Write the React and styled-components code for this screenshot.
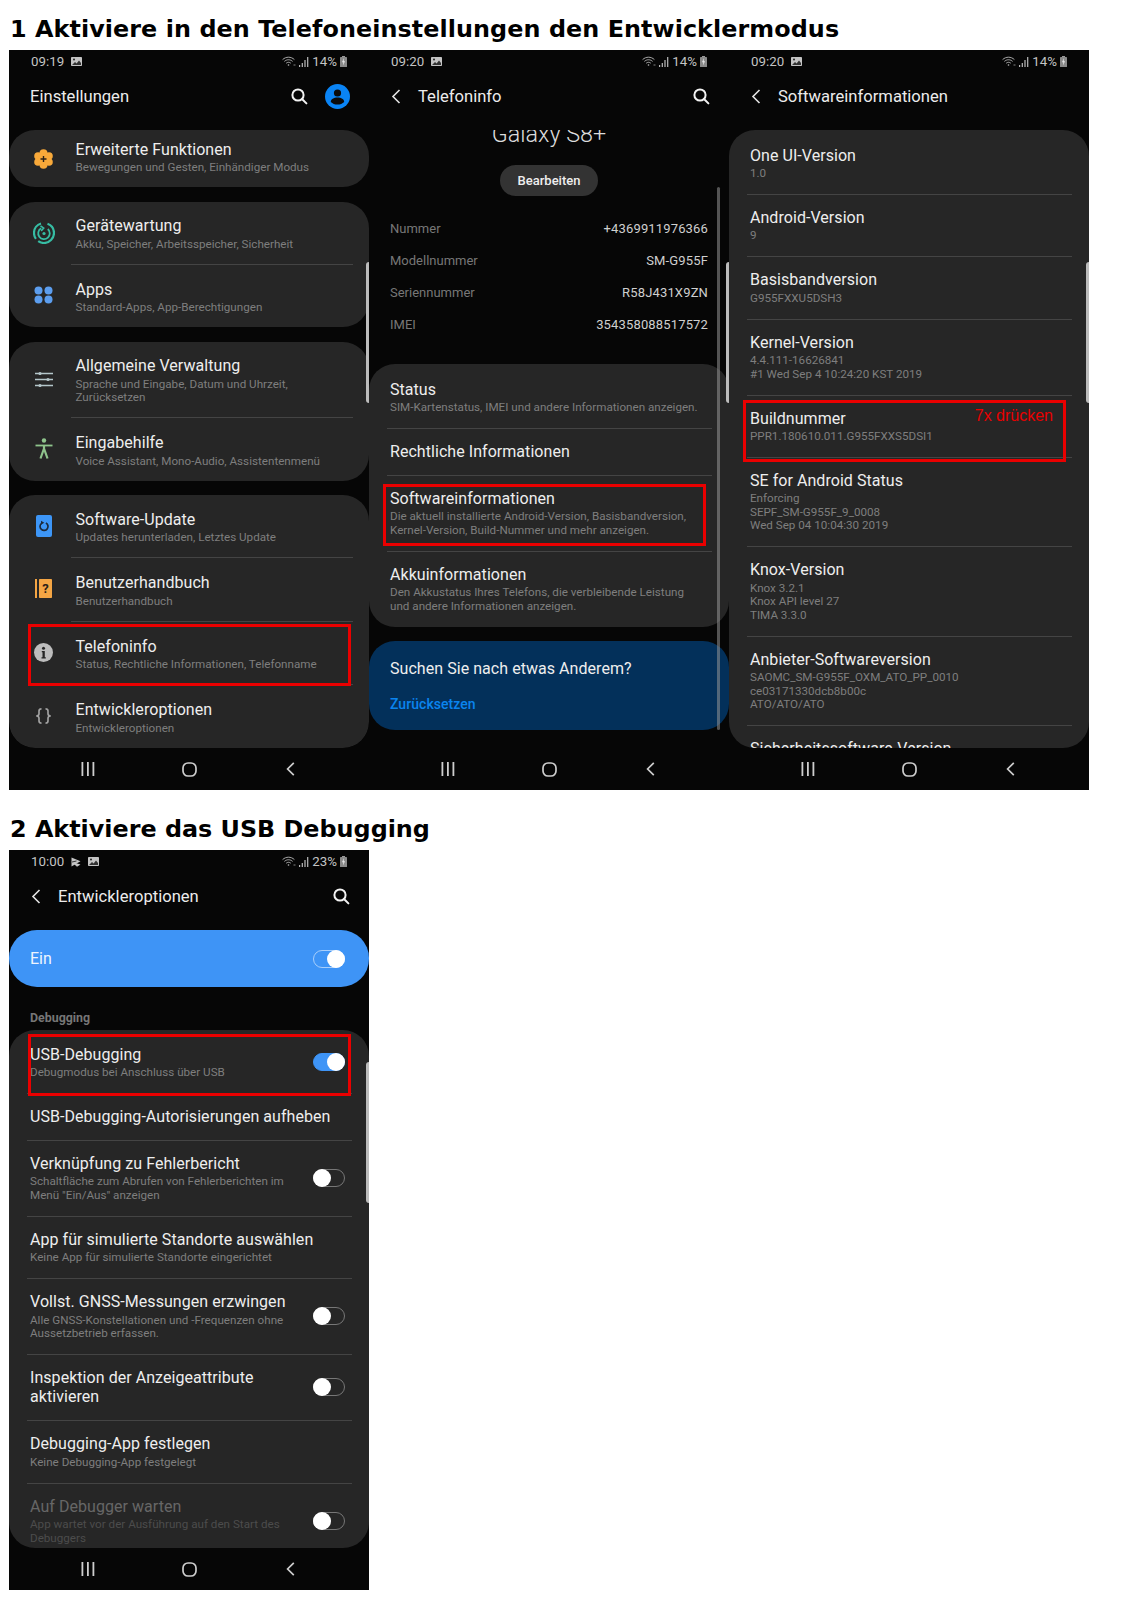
import React from 'react';
import styled, { createGlobalStyle } from 'styled-components';

const GlobalStyle = createGlobalStyle`
  html, body { margin: 0; padding: 0; background: #fff; }
  body { font-family: Roboto, "Liberation Sans", sans-serif; }
`;

const Page = styled.div`
  width: 1130px;
  min-height: 1606px;
  padding-left: 9px;
  box-sizing: border-box;
`;

const Heading = styled.h1`
  margin: 0;
  padding: ${p => (p.$second ? '25px' : '15px')} 0 7px 1px;
  height: 28px;
  line-height: 28px;
  font-family: "DejaVu Sans", sans-serif;
  font-weight: 700;
  font-size: 23.85px;
  letter-spacing: ${p => (p.$second ? '0' : '0.07px')};
  color: #000;
  box-sizing: content-box;
`;

const PhoneRow = styled.div`
  display: flex;
`;

const Phone = styled.div`
  position: relative;
  display: flex;
  flex-direction: column;
  width: 360px;
  height: 740px;
  background: #060606;
  overflow: hidden;
`;

const StatusBar = styled.div`
  display: flex;
  align-items: center;
  justify-content: space-between;
  height: 23px;
  padding: 0 22px;
  color: #c4c4c4;
  font-size: 13.3px;
`;

const StatusGroup = styled.div`
  display: flex;
  align-items: center;
  gap: ${p => p.$gap || 7}px;
`;

const Header = styled.div`
  display: flex;
  align-items: center;
  height: 46px;
  margin-bottom: 11px;
  padding: 0 19px 0 21px;
  flex-shrink: 0;
`;

const BackCell = styled.div`
  display: flex;
  width: 28px;
`;

const HeaderTitle = styled.div`
  flex: 1;
  color: #ececec;
  font-size: 16.6px;
`;

const Avatar = styled.div`
  display: flex;
  margin-left: 17px;
`;

const Body = styled.div`
  flex: 1;
  display: flex;
  flex-direction: column;
  gap: ${p => p.$gap || 0}px;
  min-height: 0;
  overflow: hidden;
  border-radius: 0 0 26px 26px;
`;

const NavBar = styled.div`
  display: flex;
  align-items: center;
  justify-content: center;
  height: 42px;
  flex-shrink: 0;
`;

const NavCell = styled.div`
  display: flex;
  justify-content: center;
  width: 101px;
`;

const Card = styled.div`
  flex-shrink: 0;
  padding-top: ${p => p.$inset || 0}px;
  background: #262626;
  border-radius: 26px;
`;

const IconRow = styled.div`
  display: flex;
  align-items: center;
`;

const IconCell = styled.div`
  display: flex;
  justify-content: center;
  width: 61.5px;
  padding-left: 7.5px;
  box-sizing: border-box;
  flex-shrink: 0;
  align-self: center;
`;

const IconRowText = styled.div`
  flex: 1;
  margin-right: 16.5px;
  padding: ${p => (p.$first ? (p.$only ? '9.5px' : '14.5px') : '15px')} 0 12.5px 5px;
  border-top: ${p => (p.$first ? '0' : '1px solid #444')};
`;

const Row = styled.div`
  display: flex;
  align-items: center;
  justify-content: space-between;
  margin: 0 17.5px;
  padding: 13px 7px 13.4px 3.5px;
  border-top: ${p => (p.$first ? '0' : '1px solid #444')};
`;

const Title = styled.div`
  color: ${p => (p.$dim ? '#666' : '#eee')};
  font-size: 16px;
  letter-spacing: 0.05px;
  line-height: 19.5px;
  white-space: pre-line;
`;

const Sub = styled.div`
  margin-top: 2px;
  color: ${p => (p.$dim ? '#4c4c4c' : '#7e7e7e')};
  font-size: 11.65px;
  line-height: 13.5px;
  white-space: pre-line;
`;

const DeviceName = styled.div`
  margin-top: -10px;
  color: #dcdcdc;
  font-size: 23.4px;
  font-weight: 300;
  line-height: 28px;
  text-align: center;
  flex-shrink: 0;
`;

const EditButton = styled.div`
  align-self: center;
  flex-shrink: 0;
  width: 98px;
  height: 31px;
  margin-top: 17px;
  background: #333;
  border-radius: 16px;
  color: #eee;
  font-size: 13px;
  font-weight: 500;
  line-height: 31px;
  text-align: center;
`;

const InfoList = styled.div`
  flex-shrink: 0;
  padding: 17px 21px 23px;
`;

const InfoRow = styled.div`
  display: flex;
  justify-content: space-between;
  height: 32px;
  line-height: 32px;
  font-size: 13px;
  color: #777;
  span:last-child { color: #cfcfcf; letter-spacing: 0.15px; }
`;

const SearchCard = styled.div`
  flex-shrink: 0;
  height: 89px;
  margin-top: 14px;
  padding: 17px 21px 0;
  box-sizing: border-box;
  background: #03305a;
  border-radius: 26px;
  color: #eee;
  font-size: 16px;
  letter-spacing: 0.05px;
  line-height: 22px;
`;

const ResetLink = styled.div`
  margin-top: 13px;
  color: #0a84ee;
  font-size: 14px;
  font-weight: 500;
`;

const OnBar = styled.div`
  display: flex;
  align-items: center;
  justify-content: space-between;
  flex-shrink: 0;
  height: 57px;
  padding: 0 24px 0 21px;
  background: #3e94f6;
  border-radius: 28px;
  color: #eef5ff;
  font-size: 16px;
`;

const GroupLabel = styled.div`
  flex-shrink: 0;
  height: 43px;
  padding: 23px 21px 0;
  box-sizing: border-box;
  color: #767676;
  font-size: 12.4px;
  font-weight: 700;
  line-height: 15px;
`;

const Toggle = styled.div`
  position: relative;
  flex-shrink: 0;
  width: 32px;
  height: 18px;
  box-sizing: border-box;
  border: 1px solid ${p => (p.$on === 'fill' ? '#3e94f6' : p.$on === 'line' ? '#a9cffb' : '#777')};
  background: ${p => (p.$on === 'fill' ? '#3e94f6' : 'transparent')};
  border-radius: 9px;
  &::after {
    content: '';
    position: absolute;
    top: -1px;
    ${p => (p.$on ? 'right: -1px;' : 'left: -1px;')}
    width: 18px;
    height: 18px;
    background: #fff;
    border-radius: 50%;
  }
`;

const EdgeHandle = styled.div`
  position: absolute;
  top: 212px;
  right: 0;
  width: 3px;
  height: 141px;
  background: #bcbcbc;
  border-radius: 3px 0 0 3px;
`;

const ScrollBar = styled.div`
  position: absolute;
  top: 137px;
  left: 348px;
  width: 3px;
  height: 543px;
  background: rgba(150, 150, 150, 0.55);
  border-radius: 2px;
`;

const Mark = styled.div`
  position: absolute;
  top: ${p => p.$top}px;
  left: ${p => p.$left}px;
  width: 323px;
  height: 62px;
  box-sizing: border-box;
  border: 3px solid #ea0000;
`;

const MarkNote = styled.div`
  position: absolute;
  top: 3px;
  right: 10px;
  color: #e80000;
  font-family: "Liberation Sans", sans-serif;
  font-size: 16px;
  line-height: 20px;
`;

const ImageGlyph = () => (
  <svg width="11" height="9" viewBox="0 0 11 9">
    <rect width="11" height="9" rx="0.8" fill="#c4c4c4" />
    <circle cx="3" cy="2.6" r="1" fill="#222" />
    <path d="M1 8l3-3 1.6 1.4L8 3.6 10 6v2z" fill="#333" />
  </svg>
);

const PlayGlyph = () => (
  <svg width="10" height="10" viewBox="0 0 10 10">
    <path d="M0.5 0.5L9.5 4.200 0.5 9.500z" fill="#c4c4c4" />
    <path d="M0.500 4.800L6 9.800l3.500-2.300z" fill="#c4c4c4" />
    <path d="M1 5l4.500-1" stroke="#111" strokeWidth="0.800" />
  </svg>
);

const Wifi = () => (
  <svg width="14" height="11" viewBox="0 0 14 11" fill="none" stroke="#bbb" strokeWidth="0.9">
    <path d="M0.6 3.6C4 0.4 9 0.4 12.4 3.6" />
    <path d="M2.4 5.4C4.8 3.2 8.2 3.2 10.6 5.4" />
    <path d="M4.2 7.2C5.6 6 7.4 6 8.8 7.2" />
    <circle cx="6.5" cy="9" r="0.8" fill="#bbb" stroke="none" />
    <path d="M11.5 9h2" strokeWidth="0.7" />
  </svg>
);

const Signal = () => (
  <svg width="10" height="10" viewBox="0 0 10 10" fill="#bbb">
    <rect x="0" y="8" width="1.2" height="2" />
    <rect x="2.7" y="6" width="1.2" height="4" />
    <rect x="5.4" y="3" width="1.2" height="7" />
    <rect x="8.1" y="0" width="1.2" height="10" />
  </svg>
);

const Battery = () => (
  <svg width="7" height="11" viewBox="0 0 7 11">
    <rect x="2" width="3" height="1" fill="#999" />
    <rect y="1" width="7" height="10" rx="0.6" fill="#8a8a8a" />
    <path d="M4 2L2 6.2h1.4L3 9.4 5 5.2H3.6z" fill="#eee" />
  </svg>
);

const SearchGlyph = () => (
  <svg width="18" height="18" viewBox="0 0 18 18" fill="none" stroke="#f2f2f2" strokeWidth="2">
    <circle cx="8" cy="8" r="5.6" />
    <path d="M12 12l4.4 4.4" strokeLinecap="round" />
  </svg>
);

const BackGlyph = () => (
  <svg width="11" height="15" viewBox="0 0 11 15" fill="none" stroke="#e4e4e4" strokeWidth="1.6">
    <path d="M9.5 1L3 7.5 9.5 14" />
  </svg>
);

const AvatarGlyph = () => (
  <svg width="25" height="25" viewBox="0 0 25 25">
    <circle cx="12.5" cy="12.5" r="12.5" fill="#0a84f5" />
    <circle cx="12.5" cy="9" r="3.6" fill="#0b0b0b" />
    <path d="M5.8 18c0-3 3-4.6 6.7-4.6s6.7 1.6 6.7 4.6c-1.7 1.7-4 2.6-6.7 2.6s-5-.9-6.7-2.6z" fill="#0b0b0b" />
  </svg>
);

const FlowerIcon = () => (
  <svg width="19" height="20" viewBox="0 0 19 20">
    <g fill="#f8a93a">
      <circle cx="9.5" cy="4.3" r="4" />
      <circle cx="9.5" cy="15.7" r="4" />
      <circle cx="4" cy="7" r="3.8" />
      <circle cx="15" cy="7" r="3.8" />
      <circle cx="4" cy="13" r="3.8" />
      <circle cx="15" cy="13" r="3.8" />
      <circle cx="9.5" cy="10" r="6" />
    </g>
    <path d="M9.5 7v6M6.5 10h6" stroke="#2a2118" strokeWidth="1.4" />
  </svg>
);

const CareIcon = () => (
  <svg width="22" height="22" viewBox="0 0 22 22" fill="none" stroke="#36bca3" strokeWidth="2.200">
    <path d="M14.500 1.700C18.300 3.100 21 6.700 21 11c0 5.500-4.500 10-10 10-2.200 0-4.200-.7-5.800-1.900" />
    <path d="M8 1.500C4 2.700 1 6.500 1 11c0 2.200.7 4.200 1.900 5.800" />
    <path d="M8.200 6.300A5.800 5.800 0 1 0 14.800 7" strokeWidth="1.800" />
    <path d="M7.500 3.800l3.200 2.400-2.600 2.700" strokeWidth="1.600" />
    <circle cx="11" cy="11.500" r="1.600" fill="#36bca3" stroke="none" />
  </svg>
);

const AppsIcon = () => (
  <svg width="19" height="18" viewBox="0 0 19 18" fill="#5c9eef">
    <circle cx="4.500" cy="4.500" r="4" />
    <circle cx="14.500" cy="4.500" r="4" />
    <circle cx="4.500" cy="13.500" r="4" />
    <circle cx="14.500" cy="13.500" r="4" />
  </svg>
);

const SlidersIcon = () => (
  <svg width="18" height="17" viewBox="0 0 18 17" fill="#b4c6ca" stroke="#b4c6ca" strokeWidth="1.300">
    <path d="M0 2.500h18M0 8.500h18M0 14.500h18" />
    <circle cx="5" cy="2.500" r="1.600" stroke="none" />
    <circle cx="13" cy="8.500" r="1.600" stroke="none" />
    <circle cx="5" cy="14.500" r="1.600" stroke="none" />
  </svg>
);

const AccessIcon = () => (
  <svg width="18" height="21" viewBox="0 0 18 21" fill="none" stroke="#8fc48c" strokeWidth="2">
    <circle cx="9" cy="2.500" r="2.200" fill="#8fc48c" stroke="none" />
    <path d="M0.500 7.500h17" strokeWidth="1.800" />
    <path d="M9 7v5M9 10.500L5.500 20.500M9 10.500l3.500 10" strokeWidth="2.200" />
  </svg>
);

const UpdateIcon = () => (
  <svg width="16" height="22" viewBox="0 0 16 22">
    <rect width="16" height="22" rx="2" fill="#3d96f7" />
    <path d="M5.300 8.500a4 4 0 1 0 4.600-.6" fill="none" stroke="#1d2a3a" strokeWidth="1.700" />
    <path d="M5 5.800l3.300 1.900L5 9.800z" fill="#1d2a3a" />
  </svg>
);

const BookIcon = () => (
  <svg width="17" height="19" viewBox="0 0 17 19">
    <rect width="2" height="19" fill="#f4a544" />
    <rect x="4" width="13" height="19" rx="0.800" fill="#f4a544" />
    <text x="10.500" y="14" textAnchor="middle" fontFamily="Roboto" fontWeight="700" fontSize="13" fill="#2a2118">?</text>
  </svg>
);

const InfoIcon = () => (
  <svg width="19" height="19" viewBox="0 0 19 19">
    <circle cx="9.500" cy="9.500" r="9.500" fill="#bdbdbd" />
    <circle cx="9.500" cy="5.200" r="1.500" fill="#262626" />
    <path d="M7.800 8h3v6.200h1V15.500H7.500v-1.300h1V9.300h-.7z" fill="#262626" />
  </svg>
);

const BracesIcon = () => (
  <svg width="17" height="16" viewBox="0 0 17 16" fill="none" stroke="#a0a0a0" strokeWidth="1.700">
    <path d="M6.500 0.900C4.600 0.900 4 1.700 4 3v2.800C4 7 3 8 1.200 8 3 8 4 9 4 10.200V13c0 1.300.6 2.100 2.500 2.100" />
    <path d="M10.500 0.900c1.900 0 2.500.8 2.500 2.100v2.800C13 7 14 8 15.800 8 14 8 13 9 13 10.200V13c0 1.300-.6 2.100-2.500 2.100" />
  </svg>
);

const RecentsGlyph = () => (
  <svg width="14" height="14" viewBox="0 0 14 14" fill="#cdcdcd">
    <rect x="0.500" width="1.800" height="14" />
    <rect x="6" width="1.800" height="14" />
    <rect x="11.500" width="1.800" height="14" />
  </svg>
);

const HomeGlyph = () => (
  <svg width="15" height="15" viewBox="0 0 15 15" fill="none" stroke="#cdcdcd" strokeWidth="1.700">
    <rect x="1" y="1" width="13" height="13" rx="5" />
  </svg>
);

const NavBackGlyph = () => (
  <svg width="9" height="14" viewBox="0 0 9 14" fill="none" stroke="#cdcdcd" strokeWidth="1.700">
    <path d="M7.800 0.800L1.600 7l6.200 6.200" />
  </svg>
);

const Status = ({ time, percent, play }) => (
  <StatusBar>
    <StatusGroup>
      <span>{time}</span>
      {play && <PlayGlyph />}
      <ImageGlyph />
    </StatusGroup>
    <StatusGroup $gap={3}>
      <Wifi />
      <Signal />
      <span>{percent}</span>
      <Battery />
    </StatusGroup>
  </StatusBar>
);

const Nav = () => (
  <NavBar>
    <NavCell><RecentsGlyph /></NavCell>
    <NavCell><HomeGlyph /></NavCell>
    <NavCell><NavBackGlyph /></NavCell>
  </NavBar>
);

const SubHeader = ({ title, search }) => (
  <Header>
    <BackCell><BackGlyph /></BackCell>
    <HeaderTitle>{title}</HeaderTitle>
    {search && <SearchGlyph />}
  </Header>
);

const SettingsRow = ({ icon, title, sub, first, only }) => (
  <IconRow>
    <IconCell>{icon}</IconCell>
    <IconRowText $first={first} $only={only}>
      <Title>{title}</Title>
      <Sub>{sub}</Sub>
    </IconRowText>
  </IconRow>
);

const TextRow = ({ title, sub, first, dim, toggle }) => (
  <Row $first={first}>
    <div>
      <Title $dim={dim}>{title}</Title>
      {sub && <Sub $dim={dim}>{sub}</Sub>}
    </div>
    {toggle !== undefined && <Toggle $on={toggle} />}
  </Row>
);

const softwareRows = [
  ['One UI-Version', '1.0'],
  ['Android-Version', '9'],
  ['Basisbandversion', 'G955FXXU5DSH3'],
  ['Kernel-Version', '4.4.111-16626841\n#1 Wed Sep 4 10:24:20 KST 2019'],
  ['Buildnummer', 'PPR1.180610.011.G955FXXS5DSI1'],
  ['SE for Android Status', 'Enforcing\nSEPF_SM-G955F_9_0008\nWed Sep 04 10:04:30 2019'],
  ['Knox-Version', 'Knox 3.2.1\nKnox API level 27\nTIMA 3.3.0'],
  ['Anbieter-Softwareversion', 'SAOMC_SM-G955F_OXM_ATO_PP_0010\nce03171330dcb8b00c\nATO/ATO/ATO'],
  ['Sicherheitssoftware-Version'],
];

const phoneInfo = [
  ['Nummer', '+4369911976366'],
  ['Modellnummer', 'SM-G955F'],
  ['Seriennummer', 'R58J431X9ZN'],
  ['IMEI', '354358088517572'],
];

const SettingsPhone = () => (
  <Phone>
    <Status time="09:19" percent="14%" />
    <Header>
      <HeaderTitle>Einstellungen</HeaderTitle>
      <SearchGlyph />
      <Avatar><AvatarGlyph /></Avatar>
    </Header>
    <Body $gap={14.5}>
      <Card>
        <SettingsRow first only icon={<FlowerIcon />} title="Erweiterte Funktionen" sub="Bewegungen und Gesten, Einhändiger Modus" />
      </Card>
      <Card>
        <SettingsRow first icon={<CareIcon />} title="Gerätewartung" sub="Akku, Speicher, Arbeitsspeicher, Sicherheit" />
        <SettingsRow icon={<AppsIcon />} title="Apps" sub="Standard-Apps, App-Berechtigungen" />
      </Card>
      <Card>
        <SettingsRow first icon={<SlidersIcon />} title="Allgemeine Verwaltung" sub={'Sprache und Eingabe, Datum und Uhrzeit,\nZurücksetzen'} />
        <SettingsRow icon={<AccessIcon />} title="Eingabehilfe" sub="Voice Assistant, Mono-Audio, Assistentenmenü" />
      </Card>
      <Card>
        <SettingsRow first icon={<UpdateIcon />} title="Software-Update" sub="Updates herunterladen, Letztes Update" />
        <SettingsRow icon={<BookIcon />} title="Benutzerhandbuch" sub="Benutzerhandbuch" />
        <SettingsRow icon={<InfoIcon />} title="Telefoninfo" sub="Status, Rechtliche Informationen, Telefonname" />
        <SettingsRow icon={<BracesIcon />} title="Entwickleroptionen" sub="Entwickleroptionen" />
      </Card>
    </Body>
    <Nav />
    <EdgeHandle />
    <Mark $top={574} $left={19} />
  </Phone>
);

const InfoPhone = () => (
  <Phone>
    <Status time="09:20" percent="14%" />
    <SubHeader search title="Telefoninfo" />
    <Body>
      <DeviceName>Galaxy S8+</DeviceName>
      <EditButton>Bearbeiten</EditButton>
      <InfoList>
        {phoneInfo.map(([label, value]) => (
          <InfoRow key={label}><span>{label}</span><span>{value}</span></InfoRow>
        ))}
      </InfoList>
      <Card $inset={2.5}>
        <TextRow first title="Status" sub="SIM-Kartenstatus, IMEI und andere Informationen anzeigen." />
        <TextRow title="Rechtliche Informationen" />
        <TextRow title="Softwareinformationen" sub={'Die aktuell installierte Android-Version, Basisbandversion,\nKernel-Version, Build-Nummer und mehr anzeigen.'} />
        <TextRow title="Akkuinformationen" sub={'Den Akkustatus Ihres Telefons, die verbleibende Leistung\nund andere Informationen anzeigen.'} />
      </Card>
      <SearchCard>
        Suchen Sie nach etwas Anderem?
        <ResetLink>Zurücksetzen</ResetLink>
      </SearchCard>
    </Body>
    <Nav />
    <ScrollBar />
    <EdgeHandle />
    <Mark $top={434} $left={14} />
  </Phone>
);

const SoftwarePhone = () => (
  <Phone>
    <Status time="09:20" percent="14%" />
    <SubHeader title="Softwareinformationen" />
    <Body>
      <Card $inset={2.5}>
        {softwareRows.map(([title, sub], i) => (
          <TextRow key={title} first={i === 0} title={title} sub={sub} />
        ))}
      </Card>
    </Body>
    <Nav />
    <EdgeHandle />
    <Mark $top={349.5} $left={14}>
      <MarkNote>7x drücken</MarkNote>
    </Mark>
  </Phone>
);

const DeveloperPhone = () => (
  <Phone>
    <Status time="10:00" percent="23%" play />
    <SubHeader search title="Entwickleroptionen" />
    <Body>
      <OnBar>Ein<Toggle $on="line" /></OnBar>
      <GroupLabel>Debugging</GroupLabel>
      <Card $inset={1.5}>
        <TextRow first title="USB-Debugging" sub="Debugmodus bei Anschluss über USB" toggle="fill" />
        <TextRow title="USB-Debugging-Autorisierungen aufheben" />
        <TextRow title="Verknüpfung zu Fehlerbericht" sub={'Schaltfläche zum Abrufen von Fehlerberichten im\nMenü "Ein/Aus" anzeigen'} toggle="" />
        <TextRow title="App für simulierte Standorte auswählen" sub="Keine App für simulierte Standorte eingerichtet" />
        <TextRow title="Vollst. GNSS-Messungen erzwingen" sub={'Alle GNSS-Konstellationen und -Frequenzen ohne\nAussetzbetrieb erfassen.'} toggle="" />
        <TextRow title={'Inspektion der Anzeigeattribute\naktivieren'} toggle="" />
        <TextRow title="Debugging-App festlegen" sub="Keine Debugging-App festgelegt" />
        <TextRow dim title="Auf Debugger warten" sub={'App wartet vor der Ausführung auf den Start des\nDebuggers'} toggle="" />
      </Card>
    </Body>
    <Nav />
    <EdgeHandle />
    <Mark $top={184} $left={19} />
  </Phone>
);

export default function App() {
  return (
    <Page>
      <GlobalStyle />
      <Heading>1 Aktiviere in den Telefoneinstellungen den Entwicklermodus</Heading>
      <PhoneRow>
        <SettingsPhone />
        <InfoPhone />
        <SoftwarePhone />
      </PhoneRow>
      <Heading $second>2 Aktiviere das USB Debugging</Heading>
      <PhoneRow>
        <DeveloperPhone />
      </PhoneRow>
    </Page>
  );
}
